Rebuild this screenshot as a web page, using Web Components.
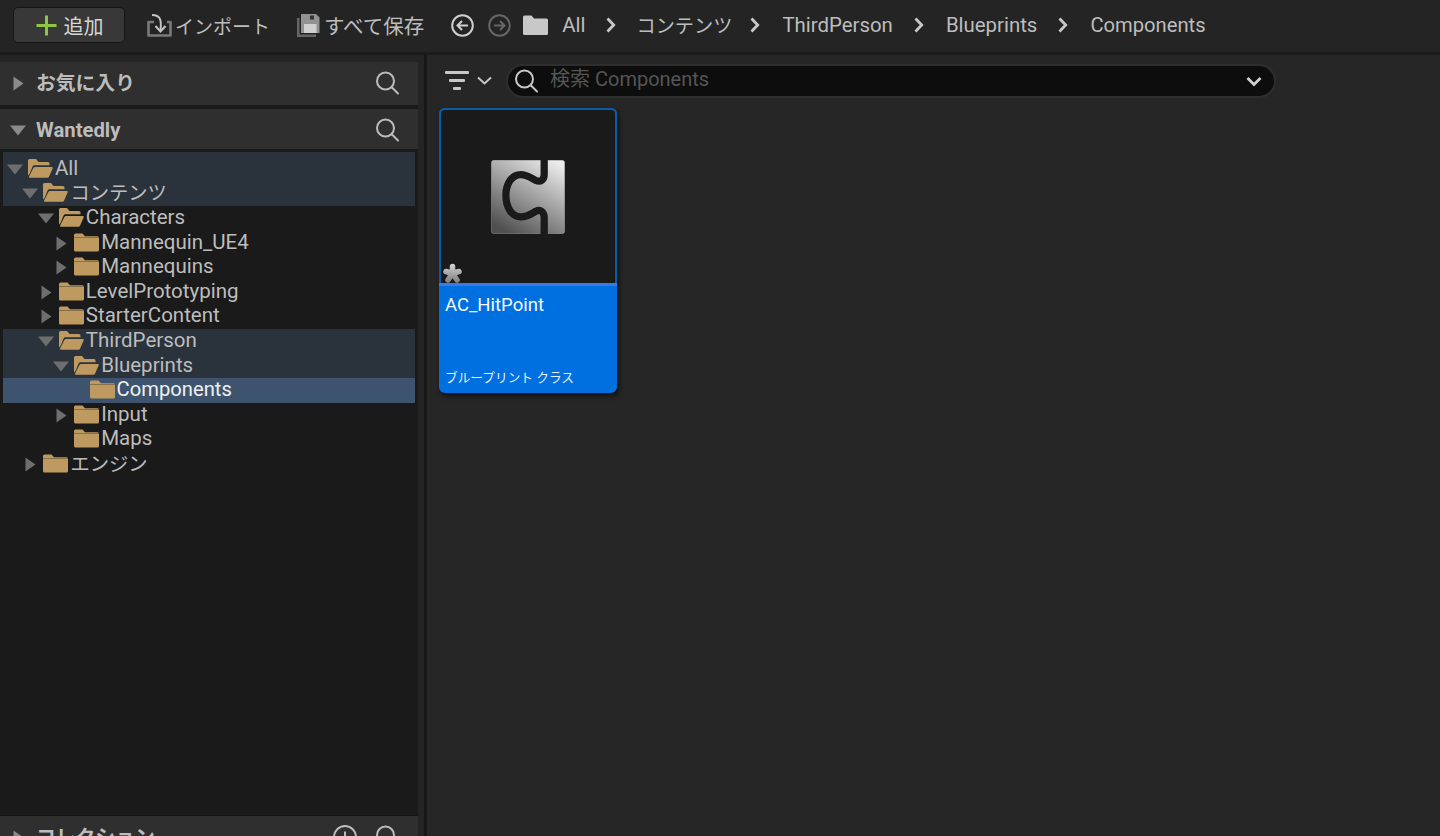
<!DOCTYPE html>
<html lang="ja">
<head>
<meta charset="utf-8">
<title>Content Browser</title>
<style>
  html, body { margin: 0; height: 100%; overflow: hidden; background: #262626; }
  body { font-family: Roboto, "Noto Sans CJK JP", sans-serif; color: #c0c0c0; }
  #app { display: flex; flex-direction: column; height: 836px; overflow: hidden; }
  #main { display: flex; flex: 1; min-height: 0; }
</style>
</head>
<body>
<div id="app">
  <cb-toolbar></cb-toolbar>
  <div id="main">
    <cb-sidebar>
      <cb-section-header slot="top" title="お気に入り" state="closed"></cb-section-header>
      <cb-section-header slot="top" title="Wantedly" state="open" latin></cb-section-header>
      <cb-tree-row depth="0" state="open" mark="path" first>All</cb-tree-row>
      <cb-tree-row depth="1" state="open" mark="path" cjk>コンテンツ</cb-tree-row>
      <cb-tree-row depth="2" state="open">Characters</cb-tree-row>
      <cb-tree-row depth="3" state="closed">Mannequin_UE4</cb-tree-row>
      <cb-tree-row depth="3" state="closed">Mannequins</cb-tree-row>
      <cb-tree-row depth="2" state="closed">LevelPrototyping</cb-tree-row>
      <cb-tree-row depth="2" state="closed">StarterContent</cb-tree-row>
      <cb-tree-row depth="2" state="open" mark="path">ThirdPerson</cb-tree-row>
      <cb-tree-row depth="3" state="open" mark="path">Blueprints</cb-tree-row>
      <cb-tree-row depth="4" mark="selected" style="font-size:20.2px">Components</cb-tree-row>
      <cb-tree-row depth="3" state="closed">Input</cb-tree-row>
      <cb-tree-row depth="3">Maps</cb-tree-row>
      <cb-tree-row depth="1" state="closed" cjk>エンジン</cb-tree-row>
      <cb-section-header slot="bottom" title="コレクション" state="closed" add></cb-section-header>
    </cb-sidebar>
    <cb-content>
      <cb-filter-bar placeholder="検索 Components"></cb-filter-bar>
      <cb-asset-card name="AC_HitPoint" kind="ブループリント クラス"></cb-asset-card>
    </cb-content>
  </div>
</div>

<script>
// shared icons, each shadow root gets its own copy
const icons = {
    search: `<svg width="26" height="26" viewBox="0 0 26 26" fill="none" stroke="currentColor" stroke-width="2"><circle cx="11.5" cy="11" r="8.5"/><path d="M18 17.5l6 6" stroke-linecap="round"/></svg>`,
    folderClosed: `<svg width="25" height="19" viewBox="0 0 25 19"><path d="M1.5 0.5h7l2.5 2.7h12.5a1.5 1.5 0 0 1 1.5 1.5V17a1.5 1.5 0 0 1-1.5 1.5H1.5A1.5 1.5 0 0 1 0 17V2A1.5 1.5 0 0 1 1.5 0.5z" fill="#bf9a60"/><path d="M0 4.6h25" stroke="#1a1a1a" stroke-width=".8" opacity=".45"/></svg>`,
    folderOpen: `<svg width="25" height="19" viewBox="0 0 25 19"><path d="M0 16.5V1.500A1.500 1.500 0 0 1 1.500 0h6.500l2.500 3h9.500a1.500 1.500 0 0 1 1.500 1.500V6.300H6.500a2 2 0 0 0-1.900 1.300L1.500 15z" fill="#bf9a60"/><path d="M7 8h16.600a1 1 0 0 1 1 1.400l-3.600 8.300a1.600 1.600 0 0 1-1.500 1H1.800a.8.8 0 0 1-.7-1.100L5.400 9.100A1.800 1.800 0 0 1 7 8z" fill="#bf9a60"/></svg>`,
    triRight: `<svg width="11" height="15" viewBox="0 0 11 15"><path d="M0.5 0.5l10 7-10 7z" fill="#6e6e6e"/></svg>`,
    triDown: `<svg width="16" height="11" viewBox="0 0 16 11"><path d="M0 0.5h16l-8 10z" fill="#6e6e6e"/></svg>`
};

function chevron() {
    return `<svg width="10" height="16" viewBox="0 0 10 16" fill="none"><path d="M1.500 1.500l6.200 6.500-6.200 6.500" stroke="#c8c8c8" stroke-width="2.800"/></svg>`;
}

const toolbarTemplate = document.createElement('template');
toolbarTemplate.innerHTML = `
  <style>
    :host { display: flex; align-items: center; flex: none; height: 52px; box-sizing: border-box; background: #242424;
      font-size: 20.4px; color: #bdbdbd; padding: 0 0 2px 13px; white-space: nowrap; }
    .add { display: flex; align-items: center; width: 112px; height: 36px; box-sizing: border-box; background: #383838;
      border: 1.5px solid #151515; border-radius: 5px; padding-left: 21.5px; gap: 7px; color: #d6d6d6; font-size: 20px; }
    .item { display: flex; align-items: center; }
    .import { margin-left: 22px; gap: 2px; font-size: 19px; }
    .save { margin-left: 27px; gap: 4px; font-size: 20.500px; }
    .nav { margin-left: 27px; gap: 14px; }
    .root { margin-left: 12px; }
    .crumb { margin-left: 14px; }
    .kana { font-size: 19.200px; }
    .chev { margin: 0 22px 0 21px; display: flex; }
    .chev.first { margin-right: 20px; }
    .chev.tight { margin-left: 18px; }
    svg { display: block; flex: none; }
  </style>
  <div class="add">
    <svg width="21" height="21" viewBox="0 0 21 21"><path d="M10.500 0.500v20M0.500 10.500h20" stroke="#8fc640" stroke-width="3"/></svg>
    <span>追加</span>
  </div>
  <div class="item import">
    <svg width="26" height="26" viewBox="0 0 26 26" fill="none"><path d="M7 10H1.500V23.500H23.500V10H20" stroke="#7a7a7a" stroke-width="2.600" stroke-linejoin="round"/><path d="M5 3C12 3 15 6 13.500 18" stroke="#c4c4c4" stroke-width="2"/><path d="M8.500 14l5 5.500 5-5.500" stroke="#c4c4c4" stroke-width="2"/></svg>
    <span>インポート</span>
  </div>
  <div class="item save">
    <svg width="23" height="23" viewBox="0 0 23 23"><path d="M0 4h2.500v16.500H19V23H0z" fill="#666"/><path d="M4 0h15l3.500 3.500V19H4z" fill="#929292"/><rect x="13" y="1.500" width="4" height="4" fill="#333"/><rect x="7" y="10" width="12.500" height="9" fill="#d0d0d0"/></svg>
    <span>すべて保存</span>
  </div>
  <div class="item nav">
    <svg width="23" height="23" viewBox="0 0 23 23" fill="none" stroke="#cfcfcf" stroke-width="2"><circle cx="11.500" cy="11.500" r="10.300"/><path d="M17 11.500H6.500M11 7l-4.500 4.500L11 16"/></svg>
    <svg width="23" height="23" viewBox="0 0 23 23" fill="none" stroke="#666" stroke-width="2"><circle cx="11.500" cy="11.500" r="10.300"/><path d="M6 11.500h10.500M12 7l4.500 4.500L12 16"/></svg>
  </div>
  <div class="item root">
    <svg width="25" height="20" viewBox="0 0 25 20"><path d="M1.500 0.500h7l2.500 3h12.500A1.500 1.500 0 0 1 25 5v13.500a1.500 1.500 0 0 1-1.500 1.500h-22A1.500 1.500 0 0 1 0 18.500V2A1.500 1.500 0 0 1 1.500.5z" fill="#c8c8c8"/></svg>
  </div>
  <span class="crumb">All</span>
  <span class="chev first">${chevron()}</span>
  <span class="kana">コンテンツ</span>
  <span class="chev tight">${chevron()}</span>
  <span>ThirdPerson</span>
  <span class="chev">${chevron()}</span>
  <span>Blueprints</span>
  <span class="chev">${chevron()}</span>
  <span style="font-size:20.2px">Components</span>
`;

class CbToolbar extends HTMLElement {
    constructor() {
        super();
        this.attachShadow({ mode: 'open' });
        this.shadowRoot.appendChild(toolbarTemplate.content.cloneNode(true));
    }
}

const sidebarTemplate = document.createElement('template');
sidebarTemplate.innerHTML = `
  <style>
    :host { display: flex; flex: none; width: 427px; box-sizing: border-box; background: #1a1a1a; border-top: 3px solid #1b1b1b; }
    .col { display: flex; flex-direction: column; width: 418px; min-height: 0; background: #242424; padding-top: 7px; box-sizing: border-box; }
    .top { display: flex; flex-direction: column; gap: 4px; flex: none; background: #1a1a1a; }
    .tree { flex: 1; min-height: 0; background: #1a1a1a; padding: 3px 3px 0; border-bottom: 1px solid #141414; }
    .gutter { width: 6px; background: #242424; }
    .bottom { flex: none; height: 20px; overflow: hidden; }
  </style>
  <div class="col">
    <div class="top"><slot name="top"></slot></div>
    <div class="tree"><slot></slot></div>
    <div class="bottom"><slot name="bottom"></slot></div>
  </div>
  <div class="gutter"></div>
`;

class CbSidebar extends HTMLElement {
    constructor() {
        super();
        this.attachShadow({ mode: 'open' });
        this.shadowRoot.appendChild(sidebarTemplate.content.cloneNode(true));
    }
}

class CbSectionHeader extends HTMLElement {
    constructor() {
        super();
        this.attachShadow({ mode: 'open' });
    }

    connectedCallback() {
        const open = this.getAttribute('state') === 'open';
        const add = this.hasAttribute('add')
            ? `<svg class="plus" width="26" height="26" viewBox="0 0 26 26" fill="none" stroke="currentColor" stroke-width="2"><circle cx="13" cy="13" r="11"/><path d="M13 7.500v11M7.500 13h11"/></svg>`
            : '';
        this.shadowRoot.innerHTML = `
          <style>
            :host { display: flex; align-items: center; height: 43px; box-sizing: border-box; background: #2f2f2f; color: #bcbcbc;
              font-size: 19.800px; font-weight: 700; padding: 0 18px 1px ${open ? 10 : 13}px; flex: none; }
            :host([latin]) { height: 40px; padding-bottom: 0; padding-top: 2px; font-size: 20.300px; }
            .arrow { width: ${open ? 26 : 23}px; display: flex; flex: none; }
            .title { flex: 1; white-space: nowrap; margin-bottom: 4px; }
            :host([latin]) .title { margin-bottom: 0; }
            svg { display: block; flex: none; }
            .plus { margin-right: 16px; }
          </style>
          <span class="arrow">${(open ? icons.triDown : icons.triRight).replace(/#6e6e6e/, '#8a8a8a')}</span>
          <span class="title">${this.getAttribute('title')}</span>
          ${add}
          ${icons.search}
        `;
    }
}

class CbTreeRow extends HTMLElement {
    constructor() {
        super();
        this.attachShadow({ mode: 'open' });
    }

    connectedCallback() {
        const depth = Number(this.getAttribute('depth')) || 0;
        const state = this.getAttribute('state');
        let arrow = '';
        if (state === 'open') arrow = icons.triDown;
        if (state === 'closed') arrow = icons.triRight;
        this.shadowRoot.innerHTML = `
          <style>
            :host { display: flex; align-items: center; height: 24.6px; box-sizing: border-box; font-size: 20.5px; color: #bdbdbd; white-space: nowrap;
              padding-left: ${depth * 15.4 + 4}px; }
            :host([first]) { height: 29.6px; padding-top: 5px; }
            :host([cjk]) { font-size: 19.300px; }
            :host([mark="path"]) { background: #2a323c; }
            :host([mark="selected"]) { background: #3e546e; color: #f0f0f0; }
            .arrow { width: 21px; height: 20px; flex: none; display: flex; align-items: center; padding-left: ${state === 'open' ? 0 : 3}px; box-sizing: border-box; }
            .folder { width: 27px; flex: none; display: flex; margin-bottom: 2px; }
            .label { margin-bottom: 3px; }
            svg { display: block; flex: none; }
          </style>
          <span class="arrow">${arrow}</span>
          <span class="folder">${state === 'open' ? icons.folderOpen : icons.folderClosed}</span>
          <span class="label"><slot></slot></span>
        `;
    }
}

const contentTemplate = document.createElement('template');
contentTemplate.innerHTML = `
  <style>
    :host { display: flex; flex-direction: column; flex: 1; min-width: 0; background: #262626; border-top: 3px solid #1b1b1b; border-left: 3px solid #181818; margin-left: -3px; }
  </style>
  <slot></slot>
`;

class CbContent extends HTMLElement {
    constructor() {
        super();
        this.attachShadow({ mode: 'open' });
        this.shadowRoot.appendChild(contentTemplate.content.cloneNode(true));
    }
}

class CbFilterBar extends HTMLElement {
    constructor() {
        super();
        this.attachShadow({ mode: 'open' });
    }

    connectedCallback() {
        this.shadowRoot.innerHTML = `
          <style>
            :host { display: flex; align-items: center; flex: none; padding: 9px 0 0 18px; color: #c8c8c8; }
            .filter { flex: none; display: block; }
            .drop { flex: none; display: block; margin-left: 8px; }
            .box { display: flex; align-items: center; width: 770px; height: 34px; box-sizing: border-box; margin-left: 14px;
              background: #0d0d0d; border: 2px solid #2e2e2e; border-radius: 17px; padding: 0 12px 0 5px; }
            .box svg { display: block; flex: none; }
            .text { flex: 1; margin-left: 11px; font-size: 20px; color: #555; white-space: nowrap; position: relative; top: -4px; }
          </style>
          <svg class="filter" width="24" height="20" viewBox="0 0 24 20" fill="#c8c8c8"><rect width="24" height="3" rx="1"/><rect x="4" y="8" width="16" height="3" rx="1"/><rect x="8" y="16" width="8" height="3" rx="1"/></svg>
          <svg class="drop" width="15" height="10" viewBox="0 0 15 10" fill="none"><path d="M1 1.500l6.500 6 6.500-6" stroke="#c8c8c8" stroke-width="2"/></svg>
          <div class="box">
            ${icons.search}
            <span class="text">${this.getAttribute('placeholder')}</span>
            <svg width="16" height="11" viewBox="0 0 16 11" fill="none"><path d="M1.500 2l6.500 6.500L14.500 2" stroke="#d0d0d0" stroke-width="2.800"/></svg>
          </div>
        `;
    }
}

class CbAssetCard extends HTMLElement {
    constructor() {
        super();
        this.attachShadow({ mode: 'open' });
    }

    connectedCallback() {
        this.shadowRoot.innerHTML = `
          <style>
            :host { display: flex; flex-direction: column; flex: none; width: 178px; height: 285px; box-sizing: border-box; margin: 10px 0 0 12px;
              border-radius: 6px; overflow: hidden; background: #006fe0; box-shadow: 2px 3px 5px rgba(0,0,0,.55); }
            .thumb { flex: none; height: 175px; box-sizing: border-box; background: #1a1a1a; border: 2px solid #0d5aab; border-bottom: 0;
              border-radius: 6px 6px 0 0; display: flex; align-items: center; justify-content: center; position: relative; }
            .star { position: absolute; left: 1px; bottom: -1px; display: block; }
            .strip { flex: none; height: 3px; background: #3b79e6; }
            .info { flex: 1; display: flex; flex-direction: column; justify-content: space-between; padding: 6px 6px 5px; color: #fff; }
            .name { font-size: 18.500px; line-height: 26px; color: #f4f8ff; }
            .kind { font-size: 12.700px; line-height: 20px; color: #e8f1ff; white-space: nowrap; }
          </style>
          <div class="thumb">
            <svg width="74" height="74" viewBox="18 18 224 224">
              <defs><linearGradient id="metal" x1=".85" y1="0" x2=".25" y2="1"><stop offset="0" stop-color="#ececec"/><stop offset="1" stop-color="#505050"/></linearGradient></defs>
              <rect x="19" y="19" width="222" height="222" rx="8" fill="url(#metal)" stroke="#c4c4c4" stroke-opacity=".5" stroke-width="2"/>
              <path d="M179 14V62C179 78 168 86 154 80C142 74 128 62 108 62C80 62 63 92 63 125C63 160 80 190 108 190C128 190 142 180 154 173C168 166 179 176 179 192V246" fill="none" stroke="#1a1a1a" stroke-width="22"/>
            </svg>
            <svg class="star" width="21" height="21" viewBox="0 0 21 21" fill="none" stroke-width="5.500" stroke-linecap="round">
              <defs><linearGradient id="star" gradientUnits="userSpaceOnUse" x1="0" y1="0" x2="0" y2="21"><stop offset="0" stop-color="#d8d8d8"/><stop offset="1" stop-color="#777"/></linearGradient></defs>
              <g stroke="url(#star)"><path d="M10.500 10.500V3.500M10.500 10.500L17 8.500M10.500 10.500L15 17M10.500 10.500L6 17M10.500 10.500L4 8.500"/></g>
            </svg>
          </div>
          <div class="strip"></div>
          <div class="info">
            <span class="name">${this.getAttribute('name')}</span>
            <span class="kind">${this.getAttribute('kind')}</span>
          </div>
        `;
    }
}

window.customElements.define('cb-toolbar', CbToolbar);
window.customElements.define('cb-sidebar', CbSidebar);
window.customElements.define('cb-section-header', CbSectionHeader);
window.customElements.define('cb-tree-row', CbTreeRow);
window.customElements.define('cb-content', CbContent);
window.customElements.define('cb-filter-bar', CbFilterBar);
window.customElements.define('cb-asset-card', CbAssetCard);
</script>
</body>
</html>
